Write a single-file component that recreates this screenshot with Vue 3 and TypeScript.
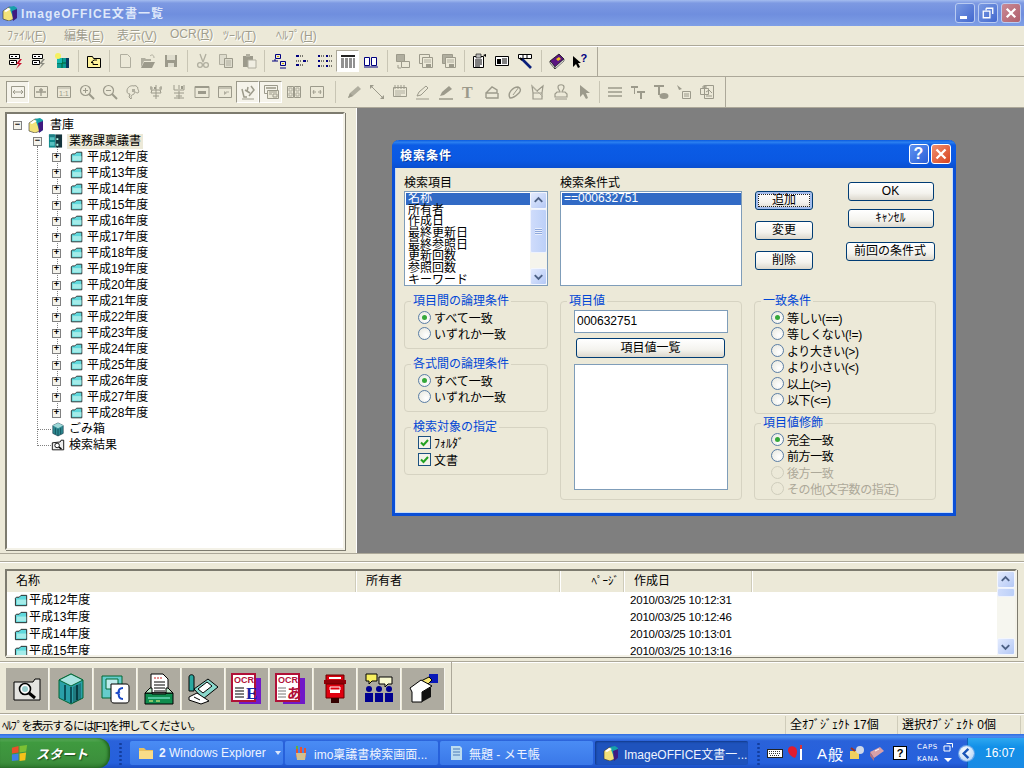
<template>
  <div class="desktop">
    <header class="titlebar">
      <svg class="title-ico" viewBox="0 0 16 16" v-html="icons.shelf"></svg>
      <span class="title-text">ImageOFFICE文書一覧</span>
      <div class="win-btns">
        <span class="wb wb-min"><i></i></span>
        <span class="wb wb-max">
          <svg viewBox="0 0 19 19"><path d="M7.5 4.5h7v6M7.5 4.5v2M4.5 7.5h7v7h-7z" fill="none" stroke="#fff" stroke-width="1.4" /></svg>
        </span>
        <span class="wb wb-close">
          <svg viewBox="0 0 19 19"><path d="M5 5l9 9M14 5l-9 9" stroke="#fff" stroke-width="2.4" /></svg>
        </span>
      </div>
    </header>

    <nav class="menubar">
      <span v-for="m in menus" :key="m.label" class="menu-item">{{ m.label }}(<u>{{ m.key }}</u>)</span>
    </nav>

    <div class="toolrow row1">
      <div class="tools">
        <template v-for="(t, i) in row1" :key="i">
          <span v-if="t.sep" class="sep" :style="{ width: t.sep + 'px' }"></span>
          <span v-else class="tool" :class="{ on: t.on }">
            <svg viewBox="0 0 16 16" v-html="icons[t.icon as string]"></svg>
          </span>
        </template>
      </div>
    </div>
    <div class="toolrow row2">
      <div class="tools">
        <template v-for="(t, i) in row2" :key="i">
          <span v-if="t.sep" class="sep" :style="{ width: t.sep + 'px' }"></span>
          <span v-else class="tool" :class="{ pressed: t.on }">
            <svg viewBox="0 0 16 16" v-html="icons[t.icon as string]"></svg>
          </span>
        </template>
      </div>
    </div>

    <main class="workspace">
      <div class="tree-side">
        <div class="tree">
          <span class="vline v1"></span>
          <span class="vline v2"></span>
          <div
            v-for="n in tree"
            :key="n.label"
            class="tree-row"
            :class="'l' + n.level"
          >
            <span class="exp" :class="{ none: !n.exp }">
              <template v-if="n.exp">{{ n.exp }}</template>
            </span>
            <svg class="tree-ico" viewBox="0 0 16 16" v-html="icons[n.icon]"></svg>
            <span class="tree-label" :class="{ sel: n.sel }">{{ n.label }}</span>
          </div>
        </div>
      </div>
      <div class="mdi"></div>
    </main>

    <div class="splitter"></div>

    <section class="listpane">
      <div class="list-main">
        <div class="list-head">
          <span class="hc c-name">名称</span>
          <span class="hc c-owner">所有者</span>
          <span class="hc c-page">ﾍﾟｰｼﾞ</span>
          <span class="hc c-date">作成日</span>
        </div>
        <div v-for="r in rows" :key="r.name" class="list-row">
          <svg class="row-ico" viewBox="0 0 16 16" v-html="icons.folder"></svg>
          <span class="row-name">{{ r.name }}</span>
          <span class="row-date">{{ r.date }}</span>
        </div>
      </div>
      <div class="sbar list-sbar">
        <span class="sb-btn"><svg viewBox="0 0 16 16"><path d="M4 9.5l4-4 4 4" fill="none" stroke="#4d6185" stroke-width="2" /></svg></span>
        <span class="sb-thumb small"></span>
        <span class="sb-track"></span>
        <span class="sb-btn"><svg viewBox="0 0 16 16"><path d="M4 6.5l4 4 4-4" fill="none" stroke="#4d6185" stroke-width="2" /></svg></span>
      </div>
    </section>

    <div class="appbar">
      <div class="appbar-in">
        <span v-for="b in bigIcons" :key="b" class="bigbtn">
          <svg viewBox="0 0 32 32" v-html="icons[b]"></svg>
        </span>
      </div>
    </div>

    <footer class="status">
      <span class="st-help">ﾍﾙﾌﾟを表示するには[F1]を押してください。</span>
      <span class="st-pane st-all">全ｵﾌﾞｼﾞｪｸﾄ 17個</span>
      <span class="st-pane st-sel">選択ｵﾌﾞｼﾞｪｸﾄ 0個</span>
    </footer>

    <div class="taskbar">
      <div class="start">
        <svg viewBox="0 0 20 20"><path d="M2 4l7-2v7l-7 1z" fill="#e8502a" /><path d="M10 2l8-1-1 7-7 1z" fill="#7cc034" /><path d="M2 11l7-1v7l-7 1z" fill="#3f7fe8" /><path d="M10 10l7-1-1 8-6 1z" fill="#f5c21a" /></svg>
        <span>スタート</span>
      </div>
      <span class="grip"></span>
      <div class="tasks">
        <div class="task">
          <svg viewBox="0 0 16 16" v-html="icons.yfolder"></svg>
          <span class="task-text"><b>2</b> Windows Explorer</span>
          <i class="task-arrow"></i>
        </div>
        <div class="task">
          <svg viewBox="0 0 16 16" v-html="icons.paint"></svg>
          <span class="task-text">imo稟議書検索画面...</span>
        </div>
        <div class="task">
          <svg viewBox="0 0 16 16" v-html="icons.note"></svg>
          <span class="task-text">無題 - メモ帳</span>
        </div>
        <div class="task active">
          <svg viewBox="0 0 16 16" v-html="icons.shelf"></svg>
          <span class="task-text">ImageOFFICE文書一...</span>
        </div>
      </div>
      <span class="grip g2"></span>
      <div class="lang">
        <svg class="l-key" viewBox="0 0 16 16"><rect x="0.5" y="4.5" width="15" height="8" fill="#fff" stroke="#222" /><path d="M2 6.5h12M2 8.5h12M3 10.5h10" stroke="#333" stroke-dasharray="1 1" /></svg>
        <svg class="l-heart" viewBox="0 0 18 18"><path d="M1 6c0-4 5-5 8-2 2 3 1 7-1 10-3-1-7-4-7-8z" fill="#e01c30" /><path d="M14 1v15" stroke="#fff" stroke-width="2" /><path d="M14 1v4" stroke="#d33" stroke-width="2" /></svg>
        <span class="l-a">A</span>
        <span class="l-han">般</span>
        <svg class="l-ico" viewBox="0 0 18 18"><rect x="2" y="7" width="9" height="8" fill="#f0d060" /><circle cx="12" cy="6" r="4" fill="#cfd8e8" /><path d="M3 4l4 3" stroke="#a03020" stroke-width="2" /></svg>
        <svg class="l-ico" viewBox="0 0 18 18"><path d="M2 8l10-5 4 4-10 7z" fill="#d8a0a8" /><path d="M2 8l4 6v3l-4-5z" fill="#b07080" /><path d="M7 7l4-2" stroke="#fff" /></svg>
        <span class="l-help">?</span>
        <span class="l-caps"><span>CAPS</span><span>KANA</span></span>
        <span class="l-caps-ico">
          <svg viewBox="0 0 10 9"><path d="M3.5 .5h6v4M1 3h6v5H1z" fill="none" stroke="#fff" /></svg>
          <svg viewBox="0 0 10 9"><path d="M1 3h8L5 7z" fill="#fff" /></svg>
        </span>
      </div>
      <div class="tray">
        <span class="tray-btn"><svg viewBox="0 0 16 16"><path d="M10 3l-5 5 5 5" fill="none" stroke="#1a55b8" stroke-width="2.6" /></svg></span>
        <span class="clock">16:07</span>
      </div>
    </div>

    <!-- modal dialog lies over the workspace -->
    <div class="dialog">
      <div class="dlg-title">
        <span>検索条件</span>
        <div class="dlg-btns">
          <span class="db db-help">?</span>
          <span class="db db-close">
            <svg viewBox="0 0 20 20"><path d="M5 5l10 10M15 5L5 15" stroke="#fff" stroke-width="2.6" /></svg>
          </span>
        </div>
      </div>
      <div class="dlg-body">
        <div class="dlg-top">
          <div class="c1">
            <div class="lbl">検索項目</div>
            <div class="lbox">
              <div class="lbox-items">
                <div v-for="(it, i) in fields" :key="it" class="lbox-item" :class="{ hi: i === 0 }">{{ it }}</div>
              </div>
              <div class="sbar">
                <span class="sb-btn"><svg viewBox="0 0 16 16"><path d="M4 9.5l4-4 4 4" fill="none" stroke="#4d6185" stroke-width="2" /></svg></span>
                <span class="sb-thumb"><i></i></span>
                <span class="sb-track"></span>
                <span class="sb-btn"><svg viewBox="0 0 16 16"><path d="M4 6.5l4 4 4-4" fill="none" stroke="#4d6185" stroke-width="2" /></svg></span>
              </div>
            </div>
          </div>
          <div class="c2">
            <div class="lbl">検索条件式</div>
            <div class="lbox">
              <div class="lbox-items">
                <div class="lbox-item hi">==000632751</div>
              </div>
            </div>
          </div>
          <div class="c3 btn-area">
            <div class="btn-col">
              <button class="xp dflt"><span>追加</span></button>
              <button class="xp">変更</button>
              <button class="xp">削除</button>
            </div>
            <div class="btn-col right">
              <button class="xp wide">OK</button>
              <button class="xp wide">ｷｬﾝｾﾙ</button>
              <button class="xp wider">前回の条件式</button>
            </div>
          </div>
        </div>

        <div class="dlg-groups">
          <div class="c1 stack">
            <fieldset class="grp g55">
              <legend>項目間の論理条件</legend>
              <label class="opt"><span class="radio on"></span>すべて一致</label>
              <label class="opt"><span class="radio"></span>いずれか一致</label>
            </fieldset>
            <fieldset class="grp g55">
              <legend>各式間の論理条件</legend>
              <label class="opt"><span class="radio on"></span>すべて一致</label>
              <label class="opt"><span class="radio"></span>いずれか一致</label>
            </fieldset>
            <fieldset class="grp g55">
              <legend>検索対象の指定</legend>
              <label class="opt chk"><span class="check"><svg viewBox="0 0 11 11"><path d="M2 5.5l2.5 2.5L9 3" fill="none" stroke="#21a121" stroke-width="2" /></svg></span>ﾌｫﾙﾀﾞ</label>
              <label class="opt chk"><span class="check"><svg viewBox="0 0 11 11"><path d="M2 5.5l2.5 2.5L9 3" fill="none" stroke="#21a121" stroke-width="2" /></svg></span>文書</label>
            </fieldset>
          </div>
          <div class="c2">
            <fieldset class="grp value-grp">
              <legend>項目値</legend>
              <div class="value-in">000632751</div>
              <button class="xp value-btn">項目値一覧</button>
              <div class="value-list"></div>
            </fieldset>
          </div>
          <div class="c3 stack-tight">
            <fieldset class="grp match">
              <legend>一致条件</legend>
              <label v-for="(o, i) in matches" :key="o" class="opt tight"><span class="radio" :class="{ on: i === 0 }"></span>{{ o }}</label>
            </fieldset>
            <fieldset class="grp modifier">
              <legend>項目値修飾</legend>
              <label v-for="(o, i) in modifiers" :key="o" class="opt tight" :class="{ off: i > 1 }"><span class="radio" :class="{ on: i === 0 }"></span>{{ o }}</label>
            </fieldset>
          </div>
        </div>
      </div>
    </div>
  </div>
</template>

<script setup lang="ts">
type Tool = { icon?: string; sep?: number; on?: boolean }

const menus = [
  { label: 'ﾌｧｲﾙ', key: 'F' },
  { label: '編集', key: 'E' },
  { label: '表示', key: 'V' },
  { label: 'OCR', key: 'R' },
  { label: 'ﾂｰﾙ', key: 'T' },
  { label: 'ﾍﾙﾌﾟ', key: 'H' },
]

const g = '#b0ae9f'
const d = '#9c9a8b'

const icons: Record<string, string> = {
  shelf: `<path d="M1 6l6-4 5 1v11l-5 2-6-2z" fill="#f2e27a" stroke="#333" stroke-width=".6"/><path d="M7 2l5-1 3 2v10l-3 2z" fill="#16a0a8"/><path d="M10 6l5-2v9l-4 3z" fill="#401a80"/><path d="M2 6l4-3 3 1-5 3z" fill="#fff"/>`,
  tree1: `<path d="M1.5 1.5h10v4h-10zM1.5 7.5h7v4h-7z" fill="#fff" stroke="#000"/><path d="M3 3.5h2M7 3.5h2M3 9.5h3" stroke="#000"/><path d="M12 6l-4 5h3l-3 5 6-6h-3l3-4z" fill="#c8102e"/>`,
  tree2: `<path d="M1.5 1.5h10v4h-10zM1.5 7.5h7v4h-7z" fill="#fff" stroke="#000"/><path d="M3 3.5h2M7 3.5h2M3 9.5h3" stroke="#000"/><path d="M12 6l-4 5h3l-3 5 6-6h-3l3-4z" fill="#8b8b80"/>`,
  cab: `<path d="M3 5h12v10H3z" fill="#0a9a92"/><path d="M8 5v10M3 10h12" stroke="#063"/><path d="M3 5h5v5H3z" fill="#17b8b0"/><circle cx="4" cy="3" r="3" fill="#f5f060"/><path d="M12 5h3v10h-3z" fill="#0b3a60"/>`,
  up: `<path d="M1.5 3.5h5l1 2h7v9h-13z" fill="#fff39a" stroke="#000"/><path d="M8 7l-3 2.5h2v2h5M8 7l3 0" fill="none" stroke="#000"/>`,
  newdoc: `<path d="M3.5 1.5h7l3 3v10h-10z" fill="none" stroke="${g}"/>`,
  open: `<path d="M1 5h4l1 1h5v2H4l-3 6z" fill="${g}"/><path d="M4 9h11l-3 6H1z" fill="${d}"/><path d="M10 3c2-2 4-1 4 2" fill="none" stroke="${g}"/>`,
  save: `<path d="M2 2h12v12H2z" fill="${d}"/><path d="M4 2h8v5H4z" fill="#dedccd"/><path d="M5 10h6v4H5z" fill="#dedccd"/>`,
  cut: `<path d="M5 1l3 8M11 1l-3 8" stroke="${g}" stroke-width="1.3"/><circle cx="5" cy="12" r="2.4" fill="none" stroke="${g}" stroke-width="1.3"/><circle cx="11" cy="12" r="2.4" fill="none" stroke="${g}" stroke-width="1.3"/>`,
  copy: `<path d="M1.5 1.5h7v10h-7z" fill="#dedccd" stroke="${g}"/><path d="M6.5 5.5h8v9h-8z" fill="#dedccd" stroke="${d}"/><path d="M8 8h5M8 10h5M8 12h5" stroke="${g}"/>`,
  paste: `<path d="M2 3h10v11H2z" fill="${d}"/><path d="M5 1h4v3H5z" fill="${g}"/><path d="M7 7h8v8H7z" fill="#f0eee2" stroke="${g}"/>`,
  large: `<path d="M4.5 1.5h5v4h-5zM9.5 8.5h5v4h-5zM1 8h6M9 15h6M3 7h2" fill="none" stroke="#000080"/><path d="M6 3.5h2M11 10.5h2" stroke="#c8a800"/>`,
  small: `<path d="M2 2h3v2H2zM2 11h3v2H2zM9 7h3v2H9z" fill="#000080"/><path d="M6 3h4M6 12h4M13 8h2M2 8h5" stroke="#000" stroke-dasharray="1 1"/>`,
  listv: `<path d="M1 2h2v2H1zM1 7h2v2H1zM1 12h2v2H1zM9 2h2v2H9zM9 7h2v2H9zM9 12h2v2H9z" fill="#000080"/><path d="M4 3h4M4 8h4M4 13h4M12 3h4M12 8h4M12 13h4" stroke="#000" stroke-dasharray="1 1"/>`,
  detail: `<path d="M1 2h14v2H1z" fill="#222"/><path d="M1 6h14M1 8h14M1 10h14M1 12h14M1 14h14" stroke="#222" stroke-dasharray="3 1"/>`,
  book2: `<path d="M1.5 4.5h5v8h-5zM8.5 4.5h5v8h-5z" fill="#fff" stroke="#000080"/><path d="M1 14h14" stroke="#000080"/>`,
  d1: `<path d="M1.5 1.5h8v7h-8z" fill="${g}" stroke="${d}"/><path d="M6.5 8.5h8v6h-8z" fill="#ece9d8" stroke="${d}"/><path d="M3 12v3h3" stroke="${d}" fill="none"/>`,
  d2: `<path d="M1.5 1.5h10v9h-10z" fill="none" stroke="${d}"/><path d="M4.5 4.5h10v10h-10z" fill="#ece9d8" stroke="${d}"/><path d="M6 7h7M6 9h7" stroke="${g}"/><path d="M8 11h5v3H8z" fill="${d}"/>`,
  d3: `<path d="M1.5 1.5h10v9h-10z" fill="${g}" stroke="${d}"/><path d="M4.5 4.5h10v10h-10z" fill="#ece9d8" stroke="${d}"/><path d="M6 7h7M6 9h7" stroke="${g}"/><path d="M8 11h5v3H8z" fill="${d}"/>`,
  props: `<path d="M2.5 3.5h10v11h-10z" fill="#fff" stroke="#000"/><path d="M5 1h5v4H5z" fill="#bbb" stroke="#000" stroke-width=".6"/><path d="M4 7h7M4 9h7M4 11h7M4 13h5" stroke="#000"/><path d="M12 2l3-1v3z" fill="#000"/>`,
  card: `<path d="M1.5 3.5h13v9h-13z" fill="#fff" stroke="#000"/><path d="M3 6h4v5H3z" fill="#000"/><path d="M8 6h5M8 8h5M8 10h5" stroke="#000"/>`,
  wand: `<path d="M1.5 1.5h13v4h-13zM6 2v3M10 2v3" fill="#fff" stroke="#000"/><path d="M5 6l9 9" stroke="#0a1f7a" stroke-width="2.6"/><path d="M3 5l2 2" stroke="#000" stroke-width="2"/>`,
  purple: `<path d="M1 8l9-7 5 5-9 8z" fill="#5a1480" stroke="#000" stroke-width=".7"/><path d="M1 8l5 6v2L1 10z" fill="#fff" stroke="#000" stroke-width=".6"/><path d="M6 14l9-8v2l-9 8z" fill="#eee" stroke="#000" stroke-width=".5"/><path d="M7 6l3-2 2 2-3 2z" fill="#f0c020"/>`,
  helpq: `<path d="M1 3v11l3-3 2 4 2-1-2-4h3z" fill="#000"/><text x="8.5" y="9" font-size="11" font-weight="700" fill="#000080" font-family="Liberation Sans">?</text>`,
  fitw: `<path d="M1.5 2.5h13v11h-13z" fill="none" stroke="${d}"/><path d="M3 8h10M5 6l-2 2 2 2M11 6l2 2-2 2" fill="none" stroke="${d}"/>`,
  fitp: `<path d="M1.5 2.5h13v11h-13z" fill="none" stroke="${d}"/><path d="M3 8h10M8 4v8M6 6h4" fill="none" stroke="${d}" stroke-width="1.3"/>`,
  one: `<path d="M1.5 2.5h13v11h-13z" fill="none" stroke="${d}"/><path d="M2 4h12" stroke="${g}"/><text x="3" y="12" font-size="7" fill="${d}" font-family="Liberation Sans">1:1</text>`,
  zin: `<circle cx="6.5" cy="6.5" r="5" fill="none" stroke="${d}" stroke-width="1.2"/><path d="M4 6.5h5M6.5 4v5" stroke="${d}"/><path d="M10 10l5 5" stroke="${d}" stroke-width="2"/>`,
  zout: `<circle cx="6.5" cy="6.5" r="5" fill="none" stroke="${d}" stroke-width="1.2"/><path d="M4 6.5h5" stroke="${d}"/><path d="M10 10l5 5" stroke="${d}" stroke-width="2"/>`,
  rot: `<path d="M2 7c0-4 4-6 7-5 1-1 3 0 4 2-1 1 2 3 0 5-2 0-3-2-4 0 1 2-2 1-3 3 0 1 1 2 0 3l-2-2 1-3c-2 0-3-1-3-3z" fill="none" stroke="${d}"/><path d="M7 5h3v3H7z" fill="${g}"/>`,
  pile1: `<path d="M3 2v4h10V2M8 1v14M3 9h10M5 12h6M4 6l-1 3M12 6l1 3M2 4h3M11 4h3" fill="none" stroke="${d}"/><path d="M6 3h2v2H6z" fill="${d}"/>`,
  pile2: `<path d="M3 1v5h4M13 1v5H9M8 1v14M3 9h10M5 12h6M3 14h10" fill="none" stroke="${d}"/><path d="M10 2h2v3h-2z" fill="${d}"/>`,
  win: `<path d="M1 2.5h14v11H1z" fill="none" stroke="${d}"/><path d="M1 2h14v2H1z" fill="${d}"/><path d="M4 7h8v3H4z" fill="${d}"/>`,
  win2: `<path d="M1.5 2.5h13v11h-13z" fill="none" stroke="${d}"/><path d="M2 4h12" stroke="${d}"/><path d="M7 7v4l3-2z" fill="${g}"/><path d="M9 8h3" stroke="${g}"/>`,
  marks: `<path d="M2 5l2 8h3M8 3l-1 5M5 6l5 3M11 2l3 4-5 6" fill="none" stroke="${d}" stroke-width="1.5"/><path d="M2 15h12" stroke="${d}"/>`,
  pages: `<path d="M1.5 1.5h13v8h-13z" fill="none" stroke="${d}"/><path d="M3 3h10v2H3z" fill="${g}"/><path d="M4.5 6.5h11v8h-11z" fill="#ece9d8" stroke="${d}"/><path d="M6 8h8M6 10h3M10 10h4v3h-4z" stroke="${d}" fill="none"/>`,
  dbl1: `<path d="M1.5 2.5h6v11h-6zM8.5 2.5h6v11h-6z" fill="none" stroke="${d}"/><path d="M3 4h3v3H3zM10 4h3v3h-3zM3 9h3v3H3zM10 9h3v3h-3z" fill="none" stroke="${g}"/>`,
  dbl2: `<path d="M1.5 2.5h13v11h-13z" fill="none" stroke="${d}"/><path d="M4 8h3M5 6L4 8l1 2M12 8H9M11 6l1 2-1 2" fill="none" stroke="${d}"/>`,
  pencil: `<path d="M2 14l2-5 8-7 3 3-8 7z" fill="${g}"/><path d="M2 14l2-5 3 3z" fill="${d}"/>`,
  line: `<path d="M2 2l12 12" stroke="${d}"/><path d="M1 1h4L1 5zM15 15h-4l4-4z" fill="${d}"/>`,
  memo: `<path d="M1.5 3.5h13v9h-13z" fill="none" stroke="${d}"/><path d="M3 1v4M6 1v4M9 1v4M12 1v4" stroke="${d}"/><path d="M3 7h10M3 9h10M3 11h6" stroke="${g}"/>`,
  marker: `<path d="M2 12l2-4 7-6 2 2-7 7z" fill="none" stroke="${d}"/><path d="M1 15h13" stroke="${d}"/>`,
  marker2: `<path d="M2 12l2-4 7-6 3 3-8 6z" fill="${d}"/><path d="M1 15h14" stroke="${d}" stroke-width="1.5"/>`,
  tT: `<text x="1" y="14" font-size="16" font-weight="700" font-family="Liberation Serif" fill="${d}">T</text>`,
  erase: `<path d="M2 14V9l6-6 5 3v3H2zM2 14h12V9" fill="none" stroke="${d}" stroke-width="1.4"/>`,
  curve: `<path d="M3 14c-3-5 3-11 8-11 3 1 3 4 1 6-3 3-5 5-9 5z" fill="none" stroke="${d}" stroke-width="1.4"/><path d="M6 11l6-8" stroke="${d}"/>`,
  shape: `<path d="M2 2l5 5 6-5-1 7H3zM3 9v6h9V9" fill="none" stroke="${d}" stroke-width="1.2"/><path d="M2 2l11 11" stroke="${g}"/>`,
  stamp: `<path d="M5 3c0-3 6-3 6 0 0 3-2 3-2 5h3l2 2v3H2v-3l2-2h3c0-2-2-2-2-5zM2 15h12" fill="none" stroke="${d}" stroke-width="1.2"/>`,
  arrow: `<path d="M4 1v12l3-3 3 5 2-1-2-5h4z" fill="${d}"/>`,
  lines: `<path d="M1 4h14M1 8h14M1 12h14" stroke="${d}" stroke-width="1.6"/>`,
  tt: `<path d="M1 2h7v2H5v6H4V4H1zM7 7h8v2h-3v6h-2V9H7z" fill="${d}"/>`,
  tblob: `<path d="M1 1h10v2H7v8H5V3H1z" fill="${d}"/><ellipse cx="11" cy="12" rx="4.5" ry="3" fill="${d}"/>`,
  note2: `<path d="M6.5 7.5h8v7h-8z" fill="none" stroke="${d}"/><path d="M8 10h5M8 12h5" stroke="${d}"/><path d="M1 1l5 4-3 1z" fill="${d}"/>`,
  pic: `<path d="M1.5 4.5h8v6h-8zM5.5 1.5h9v13h-9z" fill="#ece9d8" stroke="${d}"/><path d="M7 8l3-2 3 3M7 12h6M4 2h3v2H4z" fill="none" stroke="${d}"/>`,
  folder: `<path d="M1.5 5.5l1-1h3l2-2h6v11h-12z" fill="#5fd8dc" stroke="#222"/><path d="M3 7h10v5H3z" fill="#86e6e2"/><path d="M3 7h10v5H3z" fill="#fff" opacity=".25"/>`,
  cabinet: `<path d="M1 1h7v14H1z" fill="#0f8a8c"/><path d="M8 1h7v14H8z" fill="#14343c"/><path d="M2 3h5v4H2zM2 9h5v4H2z" fill="#56c0c0"/><path d="M9 5h2v2H9zM9 11h2v2H9z" fill="#bfe"/><path d="M1 1h6v3H1z" fill="#1f7d84"/>`,
  bin: `<path d="M2 4l6-3 6 3v9l-6 3-6-3z" fill="#2f8a92" stroke="#123" stroke-width=".6"/><path d="M2 4l6 3 6-3-6-3z" fill="#9fd8d8"/><path d="M5 7v7M8 8v8M11 7v7" stroke="#0f4f58"/>`,
  results: `<path d="M1.5 5.5l9-1 1-2h3v11h-13z" fill="#eee" stroke="#000"/><circle cx="7" cy="8.5" r="2.6" fill="#fff" stroke="#000"/><path d="M9 10.5l3 2" stroke="#000" stroke-width="1.6"/>`,
  yfolder: `<path d="M1 3h5l2 2h7v9H1z" fill="#e8c060"/><path d="M1 6h14v8H1z" fill="#f8dc88"/>`,
  paint: `<path d="M3 3h2v9H3zM7 2h2v10H7zM11 3h2v9h-2z" fill="#e85030"/><path d="M3 1h2v3H3z" fill="#60b040"/><path d="M3 8h10l-1 7H4z" fill="#d0c090"/>`,
  note: `<path d="M3 1h9l2 2v12H3z" fill="#bcdcf0"/><path d="M5 4h7M5 7h7M5 10h7" stroke="#4a7ab8"/>`,
  search32: `<path d="M3 9h19l2-3h5v21H3z" fill="#e4e4e0" stroke="#000"/><circle cx="14" cy="16" r="5.5" fill="#fff" stroke="#000" stroke-width="1.6"/><circle cx="14" cy="16" r="3" fill="#9cc"/><path d="M18 20l6 5" stroke="#000" stroke-width="3"/>`,
  bin32: `<path d="M4 7l12-6 12 6v18l-12 6-12-6z" fill="#2aa0a8" stroke="#063" /><path d="M4 7l12 6 12-6-12-6z" fill="#a8e4e0" stroke="#063"/><path d="M10 12v15M16 14v16M22 12v15" stroke="#0a5058" stroke-width="2"/><path d="M26 10v16l-8 4V14z" fill="#000" opacity=".25"/>`,
  doc32: `<path d="M3 3h20v22H3z" fill="#6cc" stroke="#063"/><path d="M7 6h12v10H7z" fill="#bfecec" stroke="#063"/><path d="M12 11h15c2 0 3 1 3 3v13c0 2-1 3-3 3H15c-2 0-3-1-3-3z" fill="#fff" stroke="#000"/><path d="M24 15c-3 0-5 2-4 4l-2 1 2 1c-1 3 1 5 4 5" fill="none" stroke="#1848c8" stroke-width="2"/>`,
  print32: `<path d="M8 1h12l5 5v14H8z" fill="#fff" stroke="#000"/><path d="M11 5h2M14 5h2M17 5h2" stroke="#c22"/><path d="M11 9h11M11 12h11M11 15h11M11 18h11" stroke="#000"/><path d="M2 20h28v11H2z" fill="#0f8c4e" stroke="#000"/><path d="M2 20l5-5h2v6h14v-6h2l5 5z" fill="#bce8c8" stroke="#000"/><path d="M5 25h22" stroke="#9fe"/><path d="M6 28h4M13 28h4" stroke="#ff8"/>`,
  fax32: `<path d="M2 4c0-3 5-3 5 0v14H2z" fill="#2aa8a0" stroke="#000"/><path d="M7 16l14-10 10 8-15 12z" fill="#8ad8cc" stroke="#000"/><path d="M11 16l9-7 5 4-9 7z" fill="#fff" stroke="#000"/><path d="M2 24l8-4 12 8-8 3-12-4z" fill="#fff" stroke="#000"/><path d="M7 24l6 3" stroke="#000"/>`,
  ocrE: `<path d="M8 5h22v26H8z" fill="#7018c8"/><path d="M1 1h23v27H1z" fill="#fff" stroke="#b01038" stroke-width="2"/><text x="3" y="10" font-size="9" font-weight="700" font-family="Liberation Sans" fill="#b01038">OCR</text><path d="M4 15h9M4 18h9M4 21h9M4 24h9" stroke="#000"/><text x="15" y="26" font-size="17" font-weight="700" font-family="Liberation Serif" fill="#1828a8">E</text>`,
  ocrA: `<path d="M8 5h22v26H8z" fill="#7018c8"/><path d="M1 1h23v27H1z" fill="#fff" stroke="#b01038" stroke-width="2"/><text x="3" y="10" font-size="9" font-weight="700" font-family="Liberation Sans" fill="#b01038">OCR</text><path d="M3 15h8M3 18h8M3 21h8M3 24h8" stroke="#777"/><text x="12" y="25" font-size="14" font-weight="700" font-family="Noto Sans CJK JP" fill="#b01038">あ</text>`,
  post32: `<path d="M7 2h18v6H7z" fill="#d80010" stroke="#600"/><path d="M5 7h22v4H5z" fill="#900008"/><path d="M7 11h18v14H7z" fill="#e00010" stroke="#600"/><path d="M10 4h12v2H10z" fill="#fff"/><path d="M11 14h10v6H11z" fill="#fff"/><path d="M11 14h10v3H11z" fill="#e00010" stroke="#fff"/><path d="M12 25h8v5h-8z" fill="#300"/>`,
  people32: `<path d="M3 1h11v7H9l-3 3V8H3z" fill="#f8f060" stroke="#000"/><path d="M16 4h13v7h-4l-3 3v-3h-6z" fill="#f8f8d0" stroke="#000"/><circle cx="6" cy="16" r="3" fill="#000090"/><circle cx="16" cy="16" r="3" fill="#000090"/><circle cx="26" cy="16" r="3" fill="#000090"/><path d="M2 20h8v9H2zM12 20h8v9h-8zM22 20h8v9h-8z" fill="#000090"/>`,
  box32: `<path d="M22 1h9v9h-9z" fill="#0818b8"/><path d="M14 8l8-4 3 3-6 6h-4z" fill="#f8e878" stroke="#000"/><path d="M3 15l11-8 11 6-10 6v10H5V19z" fill="#fff" stroke="#000"/><path d="M15 19l9-5v10l-9 5z" fill="#111"/>`,
}

const row1: Tool[] = [
  { icon: 'tree1' }, { icon: 'tree2' }, { icon: 'cab' }, { sep: 9 }, { icon: 'up' }, { sep: 8 },
  { icon: 'newdoc' }, { icon: 'open' }, { icon: 'save' }, { sep: 9 },
  { icon: 'cut' }, { icon: 'copy' }, { icon: 'paste' }, { sep: 7 },
  { icon: 'large' }, { icon: 'small' }, { icon: 'listv' }, { icon: 'detail', on: true }, { icon: 'book2' }, { sep: 9 },
  { icon: 'd1' }, { icon: 'd2' }, { icon: 'd3' }, { sep: 7 },
  { icon: 'props' }, { icon: 'card' }, { icon: 'wand' }, { sep: 9 },
  { icon: 'purple' }, { icon: 'helpq' },
]

const row2: Tool[] = [
  { icon: 'fitw', on: true }, { icon: 'fitp' }, { icon: 'one' }, { icon: 'zin' }, { icon: 'zout' },
  { icon: 'rot' }, { icon: 'pile1' }, { icon: 'pile2' }, { icon: 'win' }, { icon: 'win2' },
  { icon: 'marks', on: true }, { icon: 'pages', on: true }, { icon: 'dbl1' }, { icon: 'dbl2' }, { sep: 14 },
  { icon: 'pencil' }, { icon: 'line' }, { icon: 'memo' }, { icon: 'marker' }, { icon: 'marker2' },
  { icon: 'tT' }, { icon: 'erase' }, { icon: 'curve' }, { icon: 'shape' }, { icon: 'stamp' }, { icon: 'arrow' }, { sep: 8 },
  { icon: 'lines' }, { icon: 'tt' }, { icon: 'tblob' }, { icon: 'note2' }, { icon: 'pic' },
]

const years = ['12', '13', '14', '15', '16', '17', '18', '19', '20', '21', '22', '23', '24', '25', '26', '27', '28']

const tree = [
  { level: 0, exp: '−', icon: 'shelf', label: '書庫' },
  { level: 1, exp: '−', icon: 'cabinet', label: '業務課稟議書', sel: true },
  ...years.map((y) => ({ level: 2, exp: '+', icon: 'folder', label: `平成${y}年度` })),
  { level: 1, exp: '', icon: 'bin', label: 'ごみ箱' },
  { level: 1, exp: '', icon: 'results', label: '検索結果' },
]

const rows = [
  { name: '平成12年度', date: '2010/03/25 10:12:31' },
  { name: '平成13年度', date: '2010/03/25 10:12:46' },
  { name: '平成14年度', date: '2010/03/25 10:13:01' },
  { name: '平成15年度', date: '2010/03/25 10:13:16' },
]

const bigIcons = ['search32', 'bin32', 'doc32', 'print32', 'fax32', 'ocrE', 'ocrA', 'post32', 'people32', 'box32']

const fields = ['名称', '所有者', '作成日', '最終更新日', '最終参照日', '更新回数', '参照回数', 'キーワード']
const matches = ['等しい(==)', '等しくない(!=)', 'より大きい(>)', 'より小さい(<)', '以上(>=)', '以下(<=)']
const modifiers = ['完全一致', '前方一致', '後方一致', 'その他(文字数の指定)']
</script>

<style scoped>
.desktop {
  position: relative;
  width: 1024px;
  height: 768px;
  overflow: hidden;
  display: flex;
  flex-direction: column;
  background: #ece9d8;
  color: #000;
  font-family: 'Liberation Sans', 'Noto Sans CJK JP', sans-serif;
  font-size: 12px;
}
svg {
  display: block;
}

/* window chrome */
.titlebar {
  height: 26px;
  flex: none;
  display: flex;
  align-items: center;
  padding-left: 2px;
  background: linear-gradient(#a4bcef 0, #7d99e2 12%, #6f8ede 55%, #7f9fe6 100%);
}
.title-ico {
  width: 16px;
  height: 16px;
}
.title-text {
  margin: 0 0 2px 3px;
  color: #dfe8fa;
  font-size: 12px;
  font-weight: 700;
  letter-spacing: 1.1px;
}
.win-btns {
  margin-left: auto;
  margin-right: 3px;
  display: flex;
  gap: 3px;
}
.wb {
  width: 20px;
  height: 20px;
  border: 1px solid #b9cbf1;
  border-radius: 3px;
  box-sizing: border-box;
  background: linear-gradient(135deg, #7a9ae2, #4368cf);
  display: flex;
  align-items: center;
  justify-content: center;
}
.wb svg {
  width: 18px;
  height: 18px;
}
.wb-min {
  align-items: flex-end;
  justify-content: flex-start;
}
.wb-min i {
  width: 7px;
  height: 3px;
  margin: 0 0 3px 4px;
  background: #fff;
}
.wb-close {
  background: linear-gradient(135deg, #c98a96, #b0606c);
}
.menubar {
  height: 20px;
  flex: none;
  display: flex;
  align-items: center;
  padding: 0 0 3px 7px;
  box-sizing: border-box;
  border-bottom: 1px solid #aca899;
  box-shadow: 0 1px 0 #fff;
  position: relative;
}
.menu-item {
  width: 53px;
  color: #9f9d8e;
  text-shadow: 1px 1px 0 #fff;
  font-size: 12px;
  white-space: nowrap;
}
.menu-item:first-child {
  width: 57px;
}

/* toolbars */
.toolrow {
  flex: none;
  display: flex;
}
.row1 {
  height: 31px;
  box-sizing: border-box;
  padding-left: 4px;
  border-bottom: 1px solid #aca899;
}
.row1 .tools {
  width: 593px;
  border-right: 1px solid #aca899;
}
.row2 {
  height: 31px;
  box-sizing: border-box;
  padding-left: 6px;
  border-bottom: 1px solid #aca899;
}
.row2 .tools {
  width: 719px;
  border-right: 1px solid #aca899;
}
.tools {
  display: flex;
  align-items: center;
}
.tool {
  width: 23px;
  height: 22px;
  flex: none;
  display: flex;
  align-items: center;
  justify-content: center;
  box-sizing: border-box;
}
.tool svg {
  width: 16px;
  height: 16px;
}
.tool.on {
  background: #fff;
  border: 1px solid;
  border-color: #aca899 #fff #fff #aca899;
}
.tool.pressed {
  background: #f5f3ea;
  border: 1px solid;
  border-color: #9b998a #fff #fff #9b998a;
}
.sep {
  flex: none;
  height: 22px;
  position: relative;
}
.sep::after {
  content: '';
  position: absolute;
  left: 50%;
  top: 0;
  bottom: 0;
  width: 1px;
  background: #c8c5b4;
}

/* tree and mdi area */
.workspace {
  height: 445px;
  flex: none;
  display: flex;
}
.tree-side {
  width: 356px;
  flex: none;
  box-sizing: border-box;
  padding: 4px 11px 3px 5px;
}
.tree {
  position: relative;
  height: 100%;
  box-sizing: border-box;
  padding-top: 3px;
  background: #fff;
  border: 2px solid;
  border-color: #7d7b6f #f4f2e8 #f4f2e8 #7d7b6f;
  box-shadow: 1px 1px 0 #7d7b6f;
  overflow: hidden;
}
.vline {
  position: absolute;
  width: 0;
  border-left: 1px dotted #808080;
}
.v1 {
  left: 30px;
  top: 32px;
  height: 300px;
}
.v2 {
  left: 50px;
  top: 32px;
  height: 268px;
}
.tree-row {
  position: relative;
  display: flex;
  align-items: center;
  height: 16px;
  line-height: 16px;
  font-size: 12px;
}
.l0 {
  padding-left: 6px;
}
.l1 {
  padding-left: 26px;
}
.l2 {
  padding-left: 45px;
}
.exp {
  width: 9px;
  height: 9px;
  flex: none;
  box-sizing: border-box;
  background: #f4f3ec;
  border: 1px solid #808080;
  font: 9px/7px 'Liberation Mono', monospace;
  font-weight: 700;
  text-align: center;
  position: relative;
  z-index: 1;
}
.exp.none {
  background: none;
  border: 0;
  border-bottom: 1px dotted #808080;
  width: 14px;
  height: 5px;
  margin: 0 0 4px 4px;
}
.tree-ico {
  flex: none;
  width: 16px;
  height: 16px;
  margin-left: 6px;
}
.l1 .tree-ico {
  width: 15px;
}
.l2 .tree-ico {
  width: 14px;
  margin-left: 9px;
}
.l1 .exp.none + .tree-ico {
  width: 14px;
  margin: 0 -2px 0 0;
}
.l2 .tree-label {
  margin-left: 1px;
}
.tree-label {
  margin-left: 4px;
  padding: 0 2px;
  line-height: 15px;
  white-space: nowrap;
}
.tree-label.sel {
  background: #ece9d8;
}
.mdi {
  flex: 1;
  background: #7f7f7f;
  border-left: 1px solid #fff;
}
.splitter {
  height: 16px;
  flex: none;
  position: relative;
  background: linear-gradient(#ece9d8 7px, #aca899 7px, #aca899 8px, #fff 8px, #fff 9px, #ece9d8 9px);
  border-top: 1px solid #aca899;
  box-sizing: border-box;
}

/* file list */
.listpane {
  flex: none;
  height: 88px;
  margin: 0 7px 4px 5px;
  box-sizing: border-box;
  display: flex;
  border: 2px solid;
  border-color: #7d7b6f #f4f2e8 #f4f2e8 #7d7b6f;
  box-shadow: 1px 1px 0 #7d7b6f;
  background: #ece9d8;
  overflow: hidden;
}
.list-main {
  flex: 1;
  overflow: hidden;
  background: #fff;
}
.list-head {
  display: flex;
  height: 21px;
  background: #ece9d8;
  line-height: 20px;
}
.hc {
  flex: none;
  box-sizing: border-box;
  border-right: 1px solid #cfccba;
  box-shadow: 1px 0 0 #fff;
  white-space: nowrap;
}
.c-name {
  width: 349px;
  padding-left: 9px;
}
.c-owner {
  width: 204px;
  padding-left: 10px;
}
.c-page {
  width: 64px;
  padding-right: 4px;
  text-align: right;
  font-size: 11px;
}
.c-date {
  width: 128px;
  padding-left: 10px;
}
.list-row {
  display: flex;
  align-items: center;
  height: 17px;
  line-height: 17px;
}
.row-ico {
  width: 15px;
  height: 15px;
  margin-left: 7px;
  flex: none;
}
.row-name {
  margin-left: 0;
  width: 601px;
}
.row-date {
  font-size: 11.5px;
  letter-spacing: -0.2px;
  white-space: nowrap;
}

/* scrollbars */
.sbar {
  width: 17px;
  flex: none;
  display: flex;
  flex-direction: column;
  background: #f5f4ec;
}
.list-sbar {
  width: 18px;
  background: #f6f6ef;
}
.sb-btn {
  height: 17px;
  flex: none;
  box-sizing: border-box;
  border: 1px solid #f3f6fe;
  border-radius: 2px;
  background: linear-gradient(135deg, #e3ebfe, #b4c8f5);
}
.sb-btn svg {
  width: 15px;
  height: 15px;
}
.sb-thumb {
  flex: none;
  height: 44px;
  box-sizing: border-box;
  border: 1px solid #eef2fd;
  border-radius: 2px;
  background: linear-gradient(90deg, #cfdcfb, #bcd0f8);
  display: flex;
  align-items: center;
  justify-content: center;
}
.sb-thumb i {
  width: 7px;
  height: 7px;
  background: repeating-linear-gradient(#e8eefc 0 1px, #8ea8dc 1px 2px);
}
.sb-thumb.small {
  height: 9px;
}
.sb-track {
  flex: 1;
}

/* big launcher bar */
.appbar {
  height: 53px;
  flex: none;
  box-sizing: border-box;
  border-top: 1px solid #aca899;
  border-bottom: 1px solid #aca899;
  box-shadow: inset 0 1px 0 #fff;
}
.appbar-in {
  width: 452px;
  height: 100%;
  box-sizing: border-box;
  padding: 6px 0 0 6px;
  display: flex;
  gap: 1px;
  border-right: 1px solid #aca899;
}
.bigbtn {
  width: 43px;
  height: 42px;
  flex: none;
  box-sizing: border-box;
  background: #aeaba0;
  display: flex;
  align-items: center;
  justify-content: center;
  border-right: 1px solid #f6f5ee;
}
.bigbtn svg {
  width: 32px;
  height: 32px;
}

/* status line */
.status {
  height: 20px;
  flex: none;
  display: flex;
  align-items: center;
  border-top: 1px solid #fff;
  box-sizing: border-box;
  font-size: 12px;
}
.st-help {
  padding-left: 2px;
  width: 785px;
  box-sizing: border-box;
  font-size: 11.5px;
  letter-spacing: -1.2px;
}
.st-pane {
  box-sizing: border-box;
  border-left: 1px solid #cfccba;
  padding-left: 4px;
  line-height: 18px;
  white-space: nowrap;
}
.st-all {
  width: 112px;
}
.st-sel {
  width: 124px;
  border-right: 1px solid #cfccba;
}

/* taskbar */
.taskbar {
  height: 34px;
  flex: none;
  display: flex;
  align-items: flex-end;
  box-sizing: border-box;
  background: linear-gradient(#2f6be0 0, #4b8cf0 8%, #2a62da 20%, #2560dc 85%, #1c4fc4 100%);
  color: #fff;
}
.start {
  width: 110px;
  height: 30px;
  flex: none;
  display: flex;
  align-items: center;
  gap: 7px;
  box-sizing: border-box;
  padding-left: 10px;
  border-radius: 0 12px 12px 0;
  background: linear-gradient(#5fae5f 0, #3f9a3f 15%, #3c8f3c 80%, #2f7a2f 100%);
  box-shadow: inset -2px 0 3px #1f5f1f;
}
.start svg {
  width: 19px;
  height: 19px;
}
.start span {
  font-size: 13px;
  font-weight: 700;
  font-style: italic;
  text-shadow: 1px 1px 1px #1f4f1f;
}
.grip {
  width: 20px;
  height: 24px;
  flex: none;
  align-self: flex-end;
  margin-bottom: 2px;
  background: radial-gradient(circle, #123d9e 1px, transparent 1.5px) 9px 0 / 3px 4px repeat-y;
}
.g2 {
  width: 20px;
}
.tasks {
  display: flex;
  gap: 2px;
  margin-bottom: 3px;
}
.task {
  width: 153px;
  height: 24px;
  flex: none;
  box-sizing: border-box;
  padding-left: 8px;
  display: flex;
  align-items: center;
  gap: 5px;
  border-radius: 2px;
  background: linear-gradient(#4a8cf4, #3a78e8);
  white-space: nowrap;
  overflow: hidden;
  position: relative;
}
.task svg {
  width: 16px;
  height: 16px;
  flex: none;
}
.task.active {
  background: #1f53bd;
  box-shadow: inset 1px 1px 2px #123a8a;
}
.task-text {
  font-size: 12px;
  color: #eef4ff;
}
.task-arrow {
  position: absolute;
  right: 2px;
  top: 10px;
  border: 3px solid transparent;
  border-top: 4px solid #dbe6fb;
}
.lang {
  display: flex;
  align-items: center;
  height: 24px;
  margin-bottom: 3px;
  width: 192px;
  flex: none;
  margin-left: -1px;
}
.l-key {
  width: 16px;
  height: 16px;
}
.l-heart {
  width: 18px;
  height: 18px;
  margin-left: 4px;
}
.l-a {
  margin-left: 12px;
  width: 9px;
  font-size: 15px;
  color: #fff;
}
.l-han {
  margin-left: 2px;
  width: 18px;
  font-size: 15px;
  color: #fff;
}
.l-ico {
  width: 18px;
  height: 18px;
  margin-left: 2px;
}
.l-help {
  width: 12px;
  height: 12px;
  margin-left: 7px;
  background: #fff;
  color: #000;
  border: 1px solid #000;
  font-size: 11px;
  font-weight: 700;
  line-height: 12px;
  text-align: center;
}
.l-caps {
  margin-left: 10px;
  display: flex;
  flex-direction: column;
  font: 7px/12px 'DejaVu Sans', sans-serif;
  letter-spacing: 0.6px;
  width: 26px;
}
.l-caps-ico {
  display: flex;
  flex-direction: column;
  gap: 3px;
}
.l-caps-ico svg {
  width: 10px;
  height: 9px;
}
.tray {
  flex: 1;
  height: 30px;
  display: flex;
  align-items: center;
  position: relative;
  background: linear-gradient(#2ea8f0, #1290e8 30%, #1a8ae4);
  box-shadow: inset 1px 0 0 #0d62b8;
  margin-left: 8px;
  padding-left: 18px;
}
.tray-btn {
  position: absolute;
  left: -8px;
  top: 8px;
  width: 15px;
  height: 15px;
  border-radius: 50%;
  background: radial-gradient(circle at 40% 35%, #fff, #a8ccf4);
  box-shadow: 0 0 0 1px #6aa4e8;
}
.tray-btn svg {
  width: 15px;
  height: 15px;
}
.clock {
  font-size: 12px;
  color: #fff;
}

/* search dialog */
.dialog {
  position: absolute;
  left: 392px;
  top: 140px;
  width: 564px;
  height: 376px;
  box-sizing: border-box;
  display: flex;
  flex-direction: column;
  background: #ece9d8;
  border: 3px solid #0a4fd6;
  border-top: 0;
  border-radius: 7px 7px 0 0;
  box-shadow: inset 1px 0 0 #c6dcf9, inset -1px 0 0 #c6dcf9, inset 0 -1px 0 #c6dcf9;
}
.dlg-title {
  height: 28px;
  margin: 0 -3px;
  flex: none;
  display: flex;
  align-items: center;
  padding: 0 5px 0 8px;
  border-radius: 7px 7px 0 0;
  background: linear-gradient(#0a5ae0 0, #2b80ef 8%, #0b5ce6 18%, #0a58e2 75%, #0a4fd0 100%);
  color: #fff;
  font-size: 12px;
  font-weight: 700;
  letter-spacing: 1px;
  text-shadow: 1px 1px 0 #0b3a9c;
}
.dlg-btns {
  margin-left: auto;
  display: flex;
  gap: 2px;
}
.db {
  width: 20px;
  height: 20px;
  box-sizing: border-box;
  border: 1px solid #fff;
  border-radius: 3px;
  display: flex;
  align-items: center;
  justify-content: center;
}
.db svg {
  width: 18px;
  height: 18px;
}
.db-help {
  background: linear-gradient(135deg, #5f92f0, #2a5fd8);
  font: 700 16px 'Liberation Sans', sans-serif;
  text-shadow: none;
}
.db-close {
  background: linear-gradient(135deg, #f09070, #d8431f);
}
.dlg-body {
  flex: 1;
  padding: 8px 0 0 9px;
  display: flex;
  flex-direction: column;
}
.dlg-top {
  display: flex;
  gap: 12px;
  height: 118px;
  flex: none;
}
.c1 {
  width: 144px;
  flex: none;
}
.c2 {
  width: 182px;
  flex: none;
}
.c3 {
  width: 182px;
  flex: none;
}
.lbl {
  height: 15px;
  line-height: 15px;
}
.lbox {
  height: 95px;
  box-sizing: border-box;
  display: flex;
  background: #fff;
  border: 1px solid #7f9db9;
  padding: 0;
  overflow: hidden;
}
.lbox-items {
  flex: 1;
  min-width: 0;
  padding: 1px 0 0 1px;
}
.lbox-item {
  height: 11.7px;
  line-height: 11.7px;
  padding-left: 2px;
}
.lbox-item.hi {
  background: #316ac5;
  color: #fff;
}
.btn-area {
  display: flex;
  width: 181px;
}
.btn-col {
  display: flex;
  flex-direction: column;
  align-items: flex-start;
  padding: 15px 0 0 1px;
  gap: 11px;
  width: 91px;
}
.btn-col.right {
  padding: 6px 0 0 1px;
  gap: 8px;
}
.xp {
  width: 58px;
  height: 19px;
  padding: 0;
  box-sizing: border-box;
  border: 1px solid #003c74;
  border-radius: 3px;
  background: linear-gradient(#fff, #f4f3ee 60%, #dcd8cd);
  font: 12px/15px 'Liberation Sans', 'Noto Sans CJK JP', sans-serif;
  color: #000;
}
.xp.dflt {
  box-shadow: inset 0 0 0 2px #a4bdec;
}
.xp.dflt span {
  display: block;
  margin: 2px;
  border: 1px dotted #222;
  line-height: 11px;
}
.wide {
  width: 86px;
  margin-left: 2px;
}
.wider {
  width: 89px;
  height: 19px;
  margin-top: 6px;
}
.dlg-groups {
  display: flex;
  gap: 12px;
}
.stack {
  display: flex;
  flex-direction: column;
  gap: 8px;
}
.stack-tight {
  display: flex;
  flex-direction: column;
  gap: 2px;
}
.grp {
  margin: 0;
  padding: 0 0 0 13px;
  min-width: 0;
  box-sizing: border-box;
  border: 1px solid #d6d3c2;
  border-radius: 4px;
}
.grp legend {
  padding: 0 2px;
  margin-left: -7px;
  color: #0046d5;
  line-height: 14px;
  font-size: 12px;
}
.g55 {
  height: 55px;
}
.value-grp {
  height: 206px;
  padding-left: 13px;
}
.match {
  height: 120px;
  padding-left: 16px;
}
.modifier {
  height: 84px;
  padding-left: 16px;
}
.match legend,
.modifier legend {
  margin-left: -10px;
}
.opt {
  display: flex;
  align-items: center;
  gap: 3px;
  height: 16.5px;
  margin-top: 1px;
  white-space: nowrap;
}
.opt + .opt {
  margin-top: 0;
}
.opt.tight {
  letter-spacing: -0.4px;
}
.opt.off {
  color: #aca899;
}
.radio {
  width: 13px;
  height: 13px;
  flex: none;
  box-sizing: border-box;
  border: 1px solid #5a7ea6;
  border-radius: 50%;
  background: radial-gradient(circle at 65% 65%, #fff, #e6e6dc);
  position: relative;
}
.radio.on::after {
  content: '';
  position: absolute;
  left: 3px;
  top: 3px;
  width: 5px;
  height: 5px;
  border-radius: 50%;
  background: #35a83a;
}
.opt.off .radio {
  border-color: #cfcdbc;
  background: none;
}
.check {
  width: 13px;
  height: 13px;
  flex: none;
  box-sizing: border-box;
  border: 1px solid #1c5180;
  background: #f2f2ea;
}
.opt.chk {
  height: 17px;
  margin-top: 0;
}
.value-in {
  width: 154px;
  height: 23px;
  box-sizing: border-box;
  border: 1px solid #7f9db9;
  background: #fff;
  line-height: 21px;
  padding-left: 2px;
  margin-top: 2px;
}
.value-btn {
  display: block;
  width: 149px;
  height: 20px;
  margin: 5px 0 6px 2px;
}
.value-list {
  width: 154px;
  height: 126px;
  box-sizing: border-box;
  border: 1px solid #7f9db9;
  background: #fff;
}
</style>
